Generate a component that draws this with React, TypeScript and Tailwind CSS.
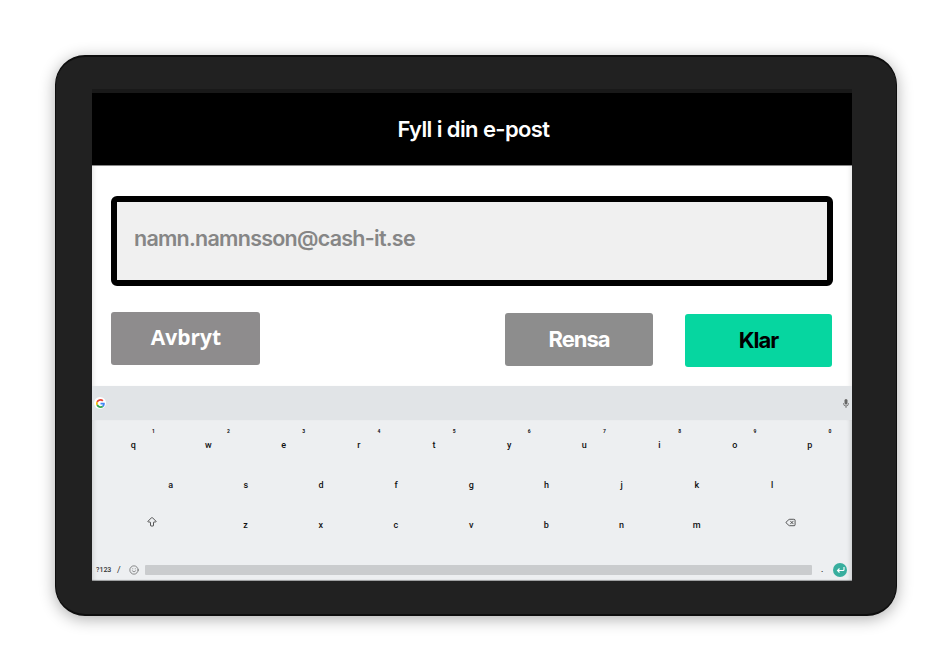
import { ArrowBigUp, Delete, Smile } from "lucide-react";

const row1: [string, string][] = [["q","1"],["w","2"],["e","3"],["r","4"],["t","5"],["y","6"],["u","7"],["i","8"],["o","9"],["p","0"]];
const row2 = ["a","s","d","f","g","h","j","k","l"];
const row3 = ["z","x","c","v","b","n","m"];

function Key({ label, sup }: { label: string; sup?: string }) {
  return (
    <div className="relative w-[75.2px] h-[40px] flex items-center justify-center text-[9px] font-medium leading-none text-[#111]">
      {label}
      {sup && <span className="absolute top-[4px] right-[16px] text-[5px] font-bold leading-none text-[#111]">{sup}</span>}
    </div>
  );
}

function GoogleG() {
  return (
    <div className="w-[12px] h-[12px] rounded-full bg-white flex items-center justify-center">
      <svg width="9" height="9" viewBox="0 0 48 48">
        <path fill="#EA4335" d="M24 9.5c3.5 0 6.700 1.300 9.100 3.500l6.800-6.800C35.900 2.400 30.400 0 24 0 14.600 0 6.500 5.400 2.600 13.200l7.900 6.200C12.400 13.700 17.700 9.500 24 9.500z" />
        <path fill="#4285F4" d="M46.900 24.500c0-1.600-.2-3.200-.4-4.500H24v9h12.900c-.6 3-2.200 5.500-4.800 7.200l7.700 6c4.500-4.200 7.100-10.300 7.100-17.700z" />
        <path fill="#FBBC05" d="M10.500 28.600c-.5-1.400-.8-3-.8-4.600s.3-3.200.8-4.600l-7.900-6.200C.9 16.500 0 20.100 0 24s.9 7.500 2.600 10.800l7.900-6.200z" />
        <path fill="#34A853" d="M24 48c6.500 0 11.900-2.100 15.800-5.800l-7.700-6c-2.100 1.400-4.900 2.300-8.100 2.300-6.300 0-11.600-4.200-13.500-9.900l-7.900 6.200C6.500 42.600 14.600 48 24 48z" />
      </svg>
    </div>
  );
}

export default function App() {
  return (
    <div className="w-[948px] h-[658px] bg-white overflow-hidden pt-[55px] pl-[55px] font-['Inter',sans-serif]">
      <div className="w-[842px] h-[561px] rounded-[30px] bg-[#212121] border-t-2 border-b-2 border-x border-[#0e0e0e] pl-[36px] pt-[32px] shadow-[0_3px_16px_rgba(0,0,0,0.32)]">
        <div className="w-[760px] h-[492px] flex flex-col overflow-hidden">
          <div className="h-[4px] bg-[#191919]" />
          <div className="h-[73px] pl-[3px] bg-black border-b border-[#888] flex items-center justify-center text-white text-[22px] font-semibold tracking-[-0.6px]">
            Fyll i din e-post
          </div>
          <div className="h-[220px] bg-white px-[19px] pt-[30px] flex flex-col shadow-[inset_5px_0_5px_-4px_rgba(0,0,0,0.12),inset_-5px_0_5px_-4px_rgba(0,0,0,0.12)]">
            <div className="h-[90px] border-[6px] border-black rounded-[6px] bg-[#f0f0f0] flex items-center pl-[17px] pb-[5px] text-[21.5px] font-semibold tracking-[-0.75px] text-[#868686]">
              namn.namnsson@cash-it.se
            </div>
            <div className="flex items-start mt-[26px]">
              <div className="w-[149px] h-[53px] pb-[2px] pl-[1px] rounded-[3px] bg-[#8e8c8d] flex items-center justify-center text-white text-[21px] font-bold font-['Open_Sans',sans-serif]">Avbryt</div>
              <div className="w-[148px] h-[53px] mt-[1px] ml-[245px] rounded-[3px] bg-[#8d8d8d] flex items-center justify-center text-white text-[22px] font-bold tracking-[-1px]">Rensa</div>
              <div className="w-[147px] h-[53px] mt-[2px] ml-[32px] rounded-[3px] bg-[#06d6a0] flex items-center justify-center text-black text-[22px] font-bold tracking-[-1px]">Klar</div>
            </div>
          </div>
          <div className="h-[34px] bg-[#e1e4e7] flex items-center justify-between pl-[2px] pr-[3px]">
            <GoogleG />
            <svg width="6" height="9" viewBox="0 0 6 9"><rect x="1.500" y="0" width="3" height="5.500" rx="1.500" fill="#666" /><path d="M0.500 4v.5a2.500 2.500 0 0 0 5 0V4M3 7v2" stroke="#666" strokeWidth="0.8" fill="none" /></svg>
          </div>
          <div className="flex-1 bg-[#edeff1] flex flex-col font-['Roboto',sans-serif] shadow-[inset_5px_0_5px_-4px_rgba(0,0,0,0.15),inset_-5px_0_5px_-4px_rgba(0,0,0,0.18),inset_0_-2px_1px_-1px_rgba(0,0,0,0.35)]">
            <div className="flex pl-[3.600px] pt-[5px]">
              {row1.map(([l, s]) => <Key key={l} label={l} sup={s} />)}
            </div>
            <div className="flex pl-[41px]">
              {row2.map((l) => <Key key={l} label={l} />)}
            </div>
            <div className="flex">
              <div className="w-[116px] h-[40px] flex items-center justify-end pr-[50px] pb-[6px] text-[#222]">
                <ArrowBigUp size={12} strokeWidth={1.5} />
              </div>
              {row3.map((l) => <Key key={l} label={l} />)}
              <div className="w-[84px] h-[40px] flex items-center justify-end pr-[22px] pb-[6px] text-[#222]">
                <Delete size={11} strokeWidth={1.6} />
              </div>
            </div>
            <div className="flex items-center mt-[18px] pl-[4px] text-[#333]">
              <span className="w-[21px] text-[7px] font-medium leading-none">?123</span>
              <span className="w-[12px] text-[9px] leading-none">/</span>
              <Smile size={10} strokeWidth={1.3} />
              <div className="w-[667px] h-[10px] ml-[6px] rounded-[1px] bg-[#caccce]" />
              <span className="ml-[9px] w-[10px] text-[8px] font-bold leading-none">.</span>
              <div className="w-[14px] h-[14px] ml-[2px] rounded-full bg-[#38ae9e] flex items-center justify-center text-white">
                <svg width="9" height="8" viewBox="0 0 9 8" fill="none" stroke="currentColor" strokeWidth="1.100">
                  <path d="M8 1v2.500a1 1 0 0 1-1 1H1.500M3.500 2.500l-2 2 2 2" />
                </svg>
              </div>
            </div>
          </div>
        </div>
      </div>
    </div>
  );
}
